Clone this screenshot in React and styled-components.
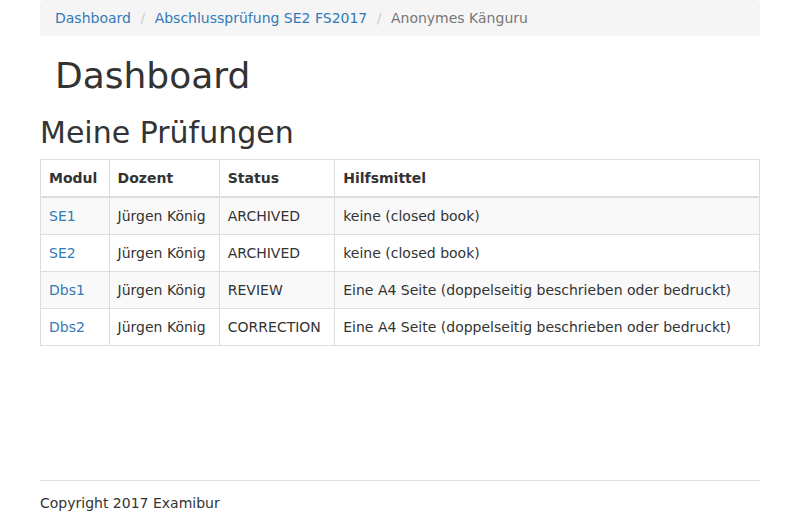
import React from "react";
import styled, { createGlobalStyle } from "styled-components";

const Global = createGlobalStyle`
  * { box-sizing: border-box; }
  body {
    margin: 0;
    font-family: "DejaVu Sans", sans-serif;
    font-size: 14px;
    line-height: 1.42857143;
    color: #333;
    background: #fff;
  }
`;

const Container = styled.div`
  width: 750px;
  margin: 0 auto;
  padding: 0 15px;
`;

const Breadcrumb = styled.ol`
  list-style: none;
  margin: 0 0 20px;
  padding: 8px 15px;
  background: #f5f5f5;
  border-radius: 4px;
  display: flex;
  gap: 4.5px;
`;

const Crumb = styled.li`
  color: ${(p) => (p.$active ? "#777" : "inherit")};
  &:not(:first-child)::before {
    content: "/\\00a0";
    padding: 0 5px;
    color: #ccc;
  }
`;

const Link = styled.a`
  color: #337ab7;
  text-decoration: none;
`;

const Title = styled.h1`
  font-size: 36px;
  font-weight: 500;
  line-height: 1.1;
  margin: 20px 0 10px;
  padding: 0 15px;
`;

const Subtitle = styled.h2`
  font-size: 30px;
  font-weight: 500;
  line-height: 1.1;
  margin: 20px 0 10px;
`;

const Table = styled.table`
  width: 100%;
  border-collapse: collapse;
  border: 1px solid #ddd;
  margin-bottom: 20px;
`;

const Th = styled.th`
  text-align: left;
  padding: 8px;
  border: 1px solid #ddd;
  border-bottom: 2px solid #ddd;
  font-weight: bold;
  line-height: 1.42857143;
`;

const Td = styled.td`
  padding: 8px;
  border: 1px solid #ddd;
  line-height: 1.42857143;
`;

const Row = styled.tr`
  background: ${(p) => (p.$odd ? "#f9f9f9" : "transparent")};
`;

const Footer = styled.footer`
  margin-top: 134px;
`;

const Rule = styled.hr`
  border: 0;
  border-top: 1px solid #ddd;
  margin: 0 0 12px;
`;

const Copy = styled.p`
  margin: 0;
`;

const rows = [
  ["SE1", "ARCHIVED", "keine (closed book)"],
  ["SE2", "ARCHIVED", "keine (closed book)"],
  ["Dbs1", "REVIEW", "Eine A4 Seite (doppelseitig beschrieben oder bedruckt)"],
  ["Dbs2", "CORRECTION", "Eine A4 Seite (doppelseitig beschrieben oder bedruckt)"],
];

export default function App() {
  return (
    <>
      <Global />
      <Container>
        <Breadcrumb>
          <Crumb><Link href="#">Dashboard</Link></Crumb>
          <Crumb><Link href="#">Abschlussprüfung SE2 FS2017</Link></Crumb>
          <Crumb $active>Anonymes Känguru</Crumb>
        </Breadcrumb>
        <Title>Dashboard</Title>
        <Subtitle>Meine Prüfungen</Subtitle>
        <Table>
          <thead>
            <tr>
              <Th>Modul</Th>
              <Th>Dozent</Th>
              <Th>Status</Th>
              <Th>Hilfsmittel</Th>
            </tr>
          </thead>
          <tbody>
            {rows.map((r, i) => (
              <Row key={r[0]} $odd={i % 2 === 0}>
                <Td><Link href="#">{r[0]}</Link></Td>
                <Td>Jürgen König</Td>
                <Td>{r[1]}</Td>
                <Td>{r[2]}</Td>
              </Row>
            ))}
          </tbody>
        </Table>
        <Footer>
          <Rule />
          <Copy>Copyright 2017 Examibur</Copy>
        </Footer>
      </Container>
    </>
  );
}
